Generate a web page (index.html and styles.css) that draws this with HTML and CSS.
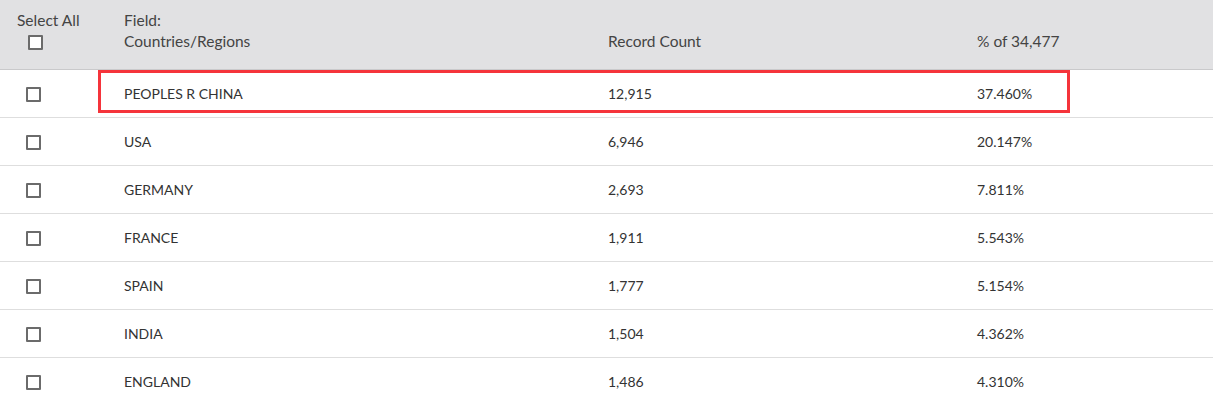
FILE: index.html
```html
<!DOCTYPE html>
<html>
<head>
<meta charset="utf-8">
<link rel="stylesheet" href="styles.css">
</head>
<body>
<div class="table">
  <div class="head">
    <div class="hcell sel">
      <span class="sel-label">Select All</span>
      <span class="cb cb-head"></span>
    </div>
    <div class="hcell field">Field:<br>Countries/Regions</div>
    <div class="hcell count">Record Count</div>
    <div class="hcell pct">% of 34,477</div>
  </div>
  <div class="row highlighted">
    <div class="cell sel"><span class="cb"></span></div>
    <div class="cell field">PEOPLES R CHINA</div>
    <div class="cell count">12,915</div>
    <div class="cell pct">37.460%</div>
    <div class="mark"></div>
  </div>
  <div class="row">
    <div class="cell sel"><span class="cb"></span></div>
    <div class="cell field">USA</div>
    <div class="cell count">6,946</div>
    <div class="cell pct">20.147%</div>
  </div>
  <div class="row">
    <div class="cell sel"><span class="cb"></span></div>
    <div class="cell field">GERMANY</div>
    <div class="cell count">2,693</div>
    <div class="cell pct">7.811%</div>
  </div>
  <div class="row">
    <div class="cell sel"><span class="cb"></span></div>
    <div class="cell field">FRANCE</div>
    <div class="cell count">1,911</div>
    <div class="cell pct">5.543%</div>
  </div>
  <div class="row">
    <div class="cell sel"><span class="cb"></span></div>
    <div class="cell field">SPAIN</div>
    <div class="cell count">1,777</div>
    <div class="cell pct">5.154%</div>
  </div>
  <div class="row">
    <div class="cell sel"><span class="cb"></span></div>
    <div class="cell field">INDIA</div>
    <div class="cell count">1,504</div>
    <div class="cell pct">4.362%</div>
  </div>
  <div class="row">
    <div class="cell sel"><span class="cb"></span></div>
    <div class="cell field">ENGLAND</div>
    <div class="cell count">1,486</div>
    <div class="cell pct">4.310%</div>
  </div>
</div>
</body>
</html>
```
FILE: styles.css
```css
html, body {
  margin: 0;
  padding: 0;
  background: #ffffff;
}
body {
  font-family: "Lato", "Liberation Sans", sans-serif;
  font-size: 14px;
  color: #333333;
  overflow: hidden;
}
.table {
  width: 1213px;
}
.head {
  display: grid;
  grid-template-columns: 100px 484px 369px 1fr;
  height: 69px;
  background: #e1e1e3;
  border-bottom: 1px solid #c9c9cb;
  color: #444444;
  font-size: 15.5px;
}
.hcell {
  padding-left: 24px;
  padding-top: 10px;
  line-height: 21px;
}
.hcell.count, .hcell.pct {
  padding-top: 31px;
}
.hcell.sel {
  padding-left: 17px;
  display: flex;
  flex-direction: column;
  align-items: flex-start;
}
.cb {
  display: block;
  width: 11px;
  height: 11px;
  border: 2px solid #6b6b6b;
  border-radius: 1px;
  background: #fff;
}
.cb-head {
  margin-left: 11px;
  margin-top: 4px;
}
.row {
  position: relative;
  display: grid;
  grid-template-columns: 100px 484px 369px 1fr;
  height: 47px;
  border-bottom: 1px solid #dedede;
  align-items: center;
}
.cell {
  padding-left: 24px;
  line-height: 20px;
}
.cell.sel {
  padding-left: 26px;
  padding-top: 2px;
}
.mark {
  position: absolute;
  left: 98px;
  top: 0;
  width: 966px;
  height: 37px;
  border: 3px solid #f5343b;
}
```
